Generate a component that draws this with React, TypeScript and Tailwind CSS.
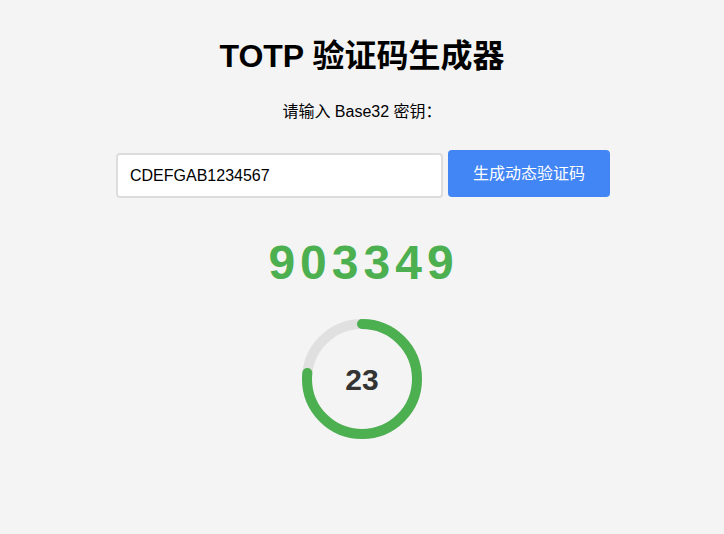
import React from "react";

export default function App() {
  const r = 55;
  const c = 2 * Math.PI * r;
  const progress = 23 / 30;
  return (
    <div
      className="min-h-[534px] w-full bg-[#f4f4f4] flex flex-col items-center pt-[38px]"
      style={{ fontFamily: '"Liberation Sans", Arial, "Noto Sans CJK SC", sans-serif' }}
    >
      <h1 className="text-[32px] font-bold leading-[37px] text-black">TOTP 验证码生成器</h1>
      <p className="text-[16px] text-black leading-[18px] mt-[28px]">请输入 Base32 密钥：</p>
      <div className="flex items-start mt-[29px] pl-[2px]">
        <input
          readOnly
          value="CDEFGAB1234567"
          className="mt-[3px] w-[327px] h-[45px] border-2 border-[#dddddd] rounded-[4px] bg-white px-[12px] text-[16px] text-black outline-none"
        />
        <button className="ml-[5px] w-[162px] h-[47px] rounded-[4px] bg-[#4285f4] text-white text-[16px]">
          生成动态验证码
        </button>
      </div>
      <div className="mt-[37px] text-[48px] font-bold text-[#4caf50] tracking-[5px] leading-[55px] pl-[3px]">903349</div>
      <div className="relative mt-[29px] w-[120px] h-[120px]">
        <svg width="120" height="120" viewBox="0 0 120 120" className="-rotate-90">
          <circle cx="60" cy="60" r={r} fill="none" stroke="#e0e0e0" strokeWidth="10" />
          <circle
            cx="60"
            cy="60"
            r={r}
            fill="none"
            stroke="#4caf50"
            strokeWidth="10"
            strokeLinecap="round"
            strokeDasharray={c}
            strokeDashoffset={c * (1 - progress)}
          />
        </svg>
        <div className="absolute inset-0 flex items-center justify-center text-[30px] font-bold text-[#333333]">23</div>
      </div>
    </div>
  );
}
